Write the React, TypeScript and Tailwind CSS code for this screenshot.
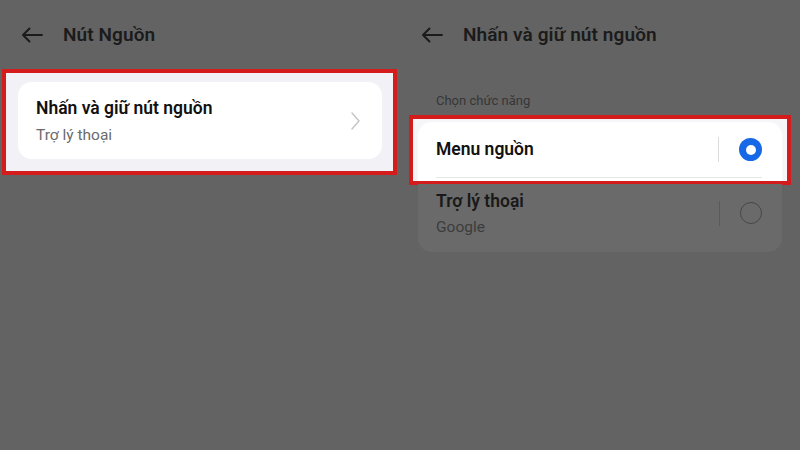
import React from 'react';

function BackArrow({ className }: { className?: string }) {
  return (
    <svg width="22" height="16" viewBox="0 0 22 16" className={className} fill="none">
      <path d="M21 8H2M8.5 1.5L2 8l6.5 6.5" stroke="currentColor" strokeWidth="2" strokeLinecap="round" strokeLinejoin="round" />
    </svg>
  );
}

function Header({ title }: { title: string }) {
  return (
    <div className="flex items-center h-[70px] pl-[21px] text-[#1b1b1b]">
      <BackArrow />
      <span className="ml-[20px] text-[19px] font-semibold tracking-[0.1px] mt-[1px]">{title}</span>
    </div>
  );
}

export default function App() {
  return (
    <div
      className="w-[800px] h-[450px] bg-[#636363] flex overflow-hidden"
      style={{ fontFamily: 'Roboto, "Noto Sans", sans-serif' }}
    >
      {/* left screen */}
      <div className="w-[400px] flex flex-col">
        <Header title="Nút Nguồn" />
        <div className="ml-[2px] w-[395px] h-[106px] -mt-[1px] border-4 border-[#d51c1c] bg-[#f2f2f6] pt-[9px] pl-[12px] pr-[11px]">
          <div className="h-[77px] rounded-[14px] bg-white flex items-center pl-[18px] pr-[22px]">
            <div className="flex-1">
              <div className="text-[17.5px] font-semibold text-[#111] leading-[22px]">Nhấn và giữ nút nguồn</div>
              <div className="text-[15.5px] text-[#6b6b6b] leading-[20px] mt-[6px]">Trợ lý thoại</div>
            </div>
            <svg width="9" height="18" viewBox="0 0 9 18" fill="none">
              <path d="M1 1l7 8-7 8" stroke="#c4c4c4" strokeWidth="1.4" strokeLinecap="round" strokeLinejoin="round" />
            </svg>
          </div>
        </div>
      </div>

      {/* right screen */}
      <div className="w-[400px] flex flex-col">
        <Header title="Nhấn và giữ nút nguồn" />
        <div className="pl-[36px] text-[13px] text-[#363636] leading-[18px] mt-[22px]">Chọn chức năng</div>
        <div className="ml-[9px] w-[382px] h-[70px] mt-[5px] border-4 border-[#d51c1c] bg-[#f6f6f8] pt-[3px] px-[5px] overflow-hidden">
          <div className="h-[70px] rounded-t-[14px] bg-white pl-[18px] pr-[20px]">
            <div className="h-[56px] flex items-center border-b border-[#e6e6e6]">
              <div className="flex-1 text-[17.5px] font-semibold text-[#111]">Menu nguồn</div>
              <div className="w-px h-[25px] bg-[#dcdcdc] mr-[20px]" />
              <div className="w-[23px] h-[23px] rounded-full bg-[#1768e6] flex items-center justify-center">
                <div className="w-[10px] h-[10px] rounded-full bg-white" />
              </div>
            </div>
          </div>
        </div>
        <div className="ml-[18px] w-[364px] h-[68px] bg-[#6a6a6a] rounded-b-[14px] -mt-[1px] flex items-center pl-[18px] pr-[20px]">
          <div className="flex-1 -mt-[9px]">
            <div className="text-[17.5px] font-semibold text-[#191919] leading-[22px]">Trợ lý thoại</div>
            <div className="text-[15.5px] text-[#3c3c3c] leading-[20px] mt-[5px]">Google</div>
          </div>
          <div className="w-px h-[25px] bg-[#5a5a5a] mr-[20px] -mt-[10px]" />
          <div className="w-[22px] h-[22px] rounded-full border-[1.5px] border-[#474747] -mt-[10px]" />
        </div>
      </div>
    </div>
  );
}
